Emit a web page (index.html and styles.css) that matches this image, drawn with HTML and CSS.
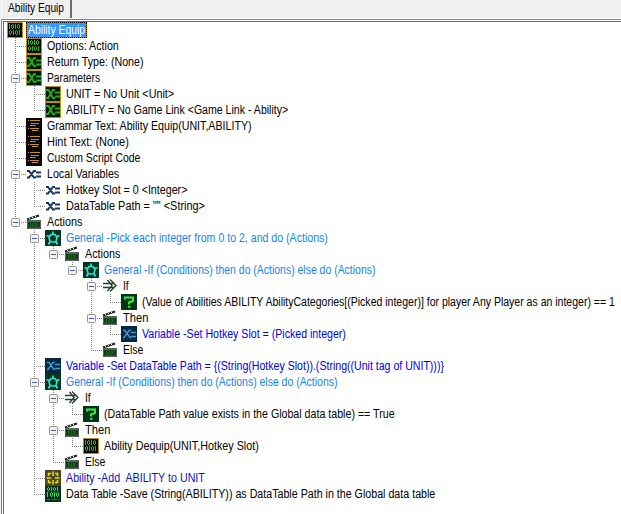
FILE: index.html
```html
<!DOCTYPE html>
<html lang="en">
<head>
<meta charset="utf-8">
<title>Ability Equip</title>
<link rel="stylesheet" href="styles.css">
</head>
<body>
<svg class="defs" width="0" height="0" aria-hidden="true">
<symbol id="bin" viewBox="0 0 16 16"><rect width="16" height="16" fill="#bf9108"/><rect x="1" y="1" width="14" height="14" fill="#000"/><path shape-rendering="crispEdges" d="M2.500 2v5M4.500 3v3M6.500 3v3M5 2.500h1M5 6.500h1M8.500 2v5M10.500 3v3M12.500 3v3M11 2.500h1M11 6.500h1M2.500 9v3M4.500 9v3M3 8.500h1M3 12.500h1M6.500 8v5M8.500 9v3M10.500 9v3M9 8.500h1M9 12.500h1M12.500 8v5" stroke="#22c01e" fill="none"/></symbol>
<symbol id="table" viewBox="0 0 16 16"><rect width="16" height="16" fill="#05361b"/><path shape-rendering="crispEdges" d="M2.500 2v2M4.500 2v2M3 1.500h1M3 4.500h1M6.500 1v4M8.500 2v2M10.500 2v2M9 1.500h1M9 4.500h1M12.500 1v4M2.500 6v5M5.500 7v3M7.500 7v3M6 6.500h1M6 10.500h1M9.500 6v5M11.500 7v3M13.500 7v3M12 6.500h1M12 10.500h1" stroke="#3ed45c" fill="none"/><path d="M2 13.500h3M6 13.500h1M8 13.500h3M12 13.500h2" stroke="#1c8237"/></symbol>
<symbol id="param" viewBox="0 0 16 16"><rect width="16" height="16" fill="#bf9108"/><rect x="1" y="1" width="14" height="14" fill="#001400"/><path d="M1 4h2.500l4.500 8h2M1 12h2l5-8h2M10 6.500h5M10 10.500h5" stroke="#18ae19" stroke-width="2" fill="none"/></symbol>
<symbol id="script" viewBox="0 0 16 16"><rect width="16" height="16" fill="#050400"/><path shape-rendering="crispEdges" d="M2 2.500h1M4 2.500h10M5 5.500h8M4 7.500h6M2 10.500h1M4 10.500h9M6 12.500h6" stroke="#c59412" fill="none"/></symbol>
<symbol id="local" viewBox="0 0 16 16"><path d="M1 5h2l5 6.500h2M1 11.500h2l5-6.500h2M10 6.500h5M10 10.500h5" stroke="#153461" stroke-width="2" fill="none"/></symbol>
<symbol id="set" viewBox="0 0 16 16"><rect width="16" height="16" fill="#062746"/><path d="M2 4.500h2l5 7h1M2 11.500h1l5-7h2M10 6.500h5M10 10.500h5" stroke="#439dce" stroke-width="1.300" fill="none"/></symbol>
<symbol id="clap" viewBox="0 0 16 16"><path d="M1 5.500L13 1.500" stroke="#172019" stroke-width="2"/><path d="M3 4l1 1.200M6 3l1 1.200M9 2l1 1.200" stroke="#fff"/><path d="M1 6h14v8H1z" fill="#56665b"/><path d="M2 8h12v5H2z" fill="#123a18"/><path d="M4.500 8.500v4M7 8.500v4M9 8.500l2.500 4M11.500 8.500l-2.500 4" stroke="#1b7822" fill="none"/><path d="M1 14.200h14" stroke="#111"/></symbol>
<symbol id="star" viewBox="0 0 16 16"><rect width="16" height="16" fill="#05351e"/><path d="M8 1.500v3M1.500 5.500l3 1M14.500 5.500l-3 1M3.500 14.500l1.500-3M12.500 14.500L11 11.500M6 4.500h4L12 7.500L10.800 12H5.200L4 7.500Z" stroke="#31e0d3" stroke-width="1.700" fill="none"/></symbol>
<symbol id="cond" viewBox="0 0 16 16"><path d="M1 5.500h11M1 9.500h11M5.500 2L10 7.500l-4.500 5.500M8 1.500L14 7.500l-6 6" stroke="#254030" stroke-width="1.400" fill="none"/></symbol>
<symbol id="ask" viewBox="0 0 16 16"><rect width="16" height="16" fill="#043516"/><path d="M4 5.500V3.500h8V7L8 8.500V10.500M7 12.800h2.500" stroke="#3ce442" stroke-width="2" fill="none"/></symbol>
<symbol id="target" viewBox="0 0 16 16"><rect width="16" height="16" fill="#4c4920"/><path d="M6 3.500H3.500V6M10 3.500h2.500V6M3.500 10v2.500H6M12.500 10v2.500H10M8 1.500V6M8 10v4.500M1.500 8H6M10 8h4.500" stroke="#f2dc20" stroke-width="1.500" fill="none"/></symbol>
</svg>
<div class="window">
  <header class="tabs"><div class="tab"><span class="label" data-width="56">Ability Equip</span></div></header>
  <main class="panel"><div class="tree" id="tree"></div></main>
</div>
<script src="tree.js"></script>
</body>
</html>
```
FILE: styles.css
```css
* { box-sizing: border-box; }
body { margin: 0; background: #f0f0f0; font: 12px/16px "Liberation Sans", Arial, sans-serif; color: #000; overflow: hidden; }
.defs { display: block; height: 0; }
.window { height: 514px; display: flex; flex-direction: column; padding-left: 1px; overflow: hidden; }
.tabs { height: 19px; flex: none; display: flex; border-bottom: 1px solid #fff; }
.tab { width: 71px; padding: 0 0 0 6px; border-left: 1px solid #fff; border-right: 2px solid #6c6a6d; white-space: nowrap; }
.panel { flex: 1; border-top: 1px solid #85838a; border-left: 1px solid #85838a; padding: 1px 0 0 1px; background: #fff; }
.tree { height: 100%; border-top: 1px solid #69686e; border-left: 1px solid #69686e; padding-left: 3px; }
.label { display: inline-block; white-space: pre; transform-origin: left center; }
.row { display: flex; height: 16px; white-space: nowrap; }
.icon { width: 16px; height: 16px; flex: none; }
.text { flex: none; margin-left: 5px; }
.text.blue { color: #0000e8; }
.text.sky { color: #1684ed; }
.text.navy { color: #1010b0; }
.text.selected { margin-left: 3px; padding: 0 1px; border: 1px dotted #000; line-height: 14px; background: linear-gradient(#3399ff, #3399ff) padding-box, #cc6600 border-box; color: #fff; }
.guide { width: 19px; height: 16px; flex: none; display: flex; }
.guide svg { display: block; }
.line { stroke: #808080; stroke-dasharray: 1 1; }
.box { fill: #f5f5f5; stroke: #919191; }
.minus { stroke: #365aa9; }
```
FILE: tree.js
```js
const rows = [
  [0, "bin", "Ability Equip", 57, "selected"],
  [1, "bin", "Options: Action", 72],
  [1, "param", "Return Type: (None)", 97],
  [1, "param", "Parameters", 53],
  [2, "param", "UNIT = No Unit <Unit>", 108],
  [2, "param", "ABILITY = No Game Link <Game Link - Ability>", 222],
  [1, "script", "Grammar Text: Ability Equip(UNIT,ABILITY)", 205],
  [1, "script", "Hint Text: (None)", 82],
  [1, "script", "Custom Script Code", 93],
  [1, "local", "Local Variables", 72],
  [2, "local", "Hotkey Slot = 0 <Integer>", 121],
  [2, "local", "DataTable Path = \"\" <String>", 139],
  [1, "clap", "Actions", 35],
  [2, "star", "General -Pick each integer from 0 to 2, and do (Actions)", 262, "sky"],
  [3, "clap", "Actions", 35],
  [4, "star", "General -If (Conditions) then do (Actions) else do (Actions)", 271, "sky"],
  [5, "cond", "If", 6],
  [6, "ask", "(Value of Abilities ABILITY AbilityCategories[(Picked integer)] for player Any Player as an integer) == 1", 473],
  [5, "clap", "Then", 25],
  [6, "set", "Variable -Set Hotkey Slot = (Picked integer)", 204, "blue"],
  [5, "clap", "Else", 20],
  [2, "set", "Variable -Set DataTable Path = {(String(Hotkey Slot)).(String((Unit tag of UNIT)))}", 378, "blue"],
  [2, "star", "General -If (Conditions) then do (Actions) else do (Actions)", 271, "sky"],
  [3, "cond", "If", 6],
  [4, "ask", "(DataTable Path value exists in the Global data table) == True", 291],
  [3, "clap", "Then", 25],
  [4, "bin", "Ability Dequip(UNIT,Hotkey Slot)", 155],
  [3, "clap", "Else", 20],
  [2, "target", "Ability -Add  ABILITY to UNIT", 139, "navy"],
  [2, "table", "Data Table -Save (String(ABILITY)) as DataTable Path in the Global data table", 369]
];

// A branch continues while a later sibling exists under the same parent.
function continues(index, level) {
  for (let next = index + 1; next < rows.length; next++) {
    if (rows[next][0] < level) return false;
    if (rows[next][0] === level) return true;
  }
  return false;
}

const tree = document.getElementById("tree");
rows.forEach(([level, icon, text, width, tone = ""], index) => {
  const row = document.createElement("div");
  row.className = "row";
  for (let depth = 1; depth <= level; depth++) {
    const more = continues(index, depth);
    const own = depth === level;
    const guide = document.createElement("span");
    guide.className = "guide";
    let art = "";
    if (more || own) art += `<path class="line" d="M8.500 0V${more ? 16 : 9}"/>`;
    if (own) art += '<path class="line" d="M8 8.500H19"/>';
    if (own && rows[index + 1] && rows[index + 1][0] > level)
      art += '<rect class="box" x="4.500" y="4.500" width="8" height="8" rx="1"/><path class="minus" d="M6 8.500h5"/>';
    guide.innerHTML = `<svg width="19" height="16">${art}</svg>`;
    row.append(guide);
  }
  row.insertAdjacentHTML("beforeend", `<svg class="icon"><use href="#${icon}"/></svg>`);
  const caption = document.createElement("span");
  caption.className = "text " + tone;
  const label = document.createElement("span");
  label.className = "label";
  label.dataset.width = width;
  label.textContent = text;
  caption.append(label);
  row.append(caption);
  tree.append(row);
});

document.querySelectorAll(".label").forEach(label => {
  const width = Number(label.dataset.width);
  const natural = label.offsetWidth;
  label.style.transform = `scaleX(${width / natural})`;
  label.style.marginRight = `${width - natural}px`;
});
```
